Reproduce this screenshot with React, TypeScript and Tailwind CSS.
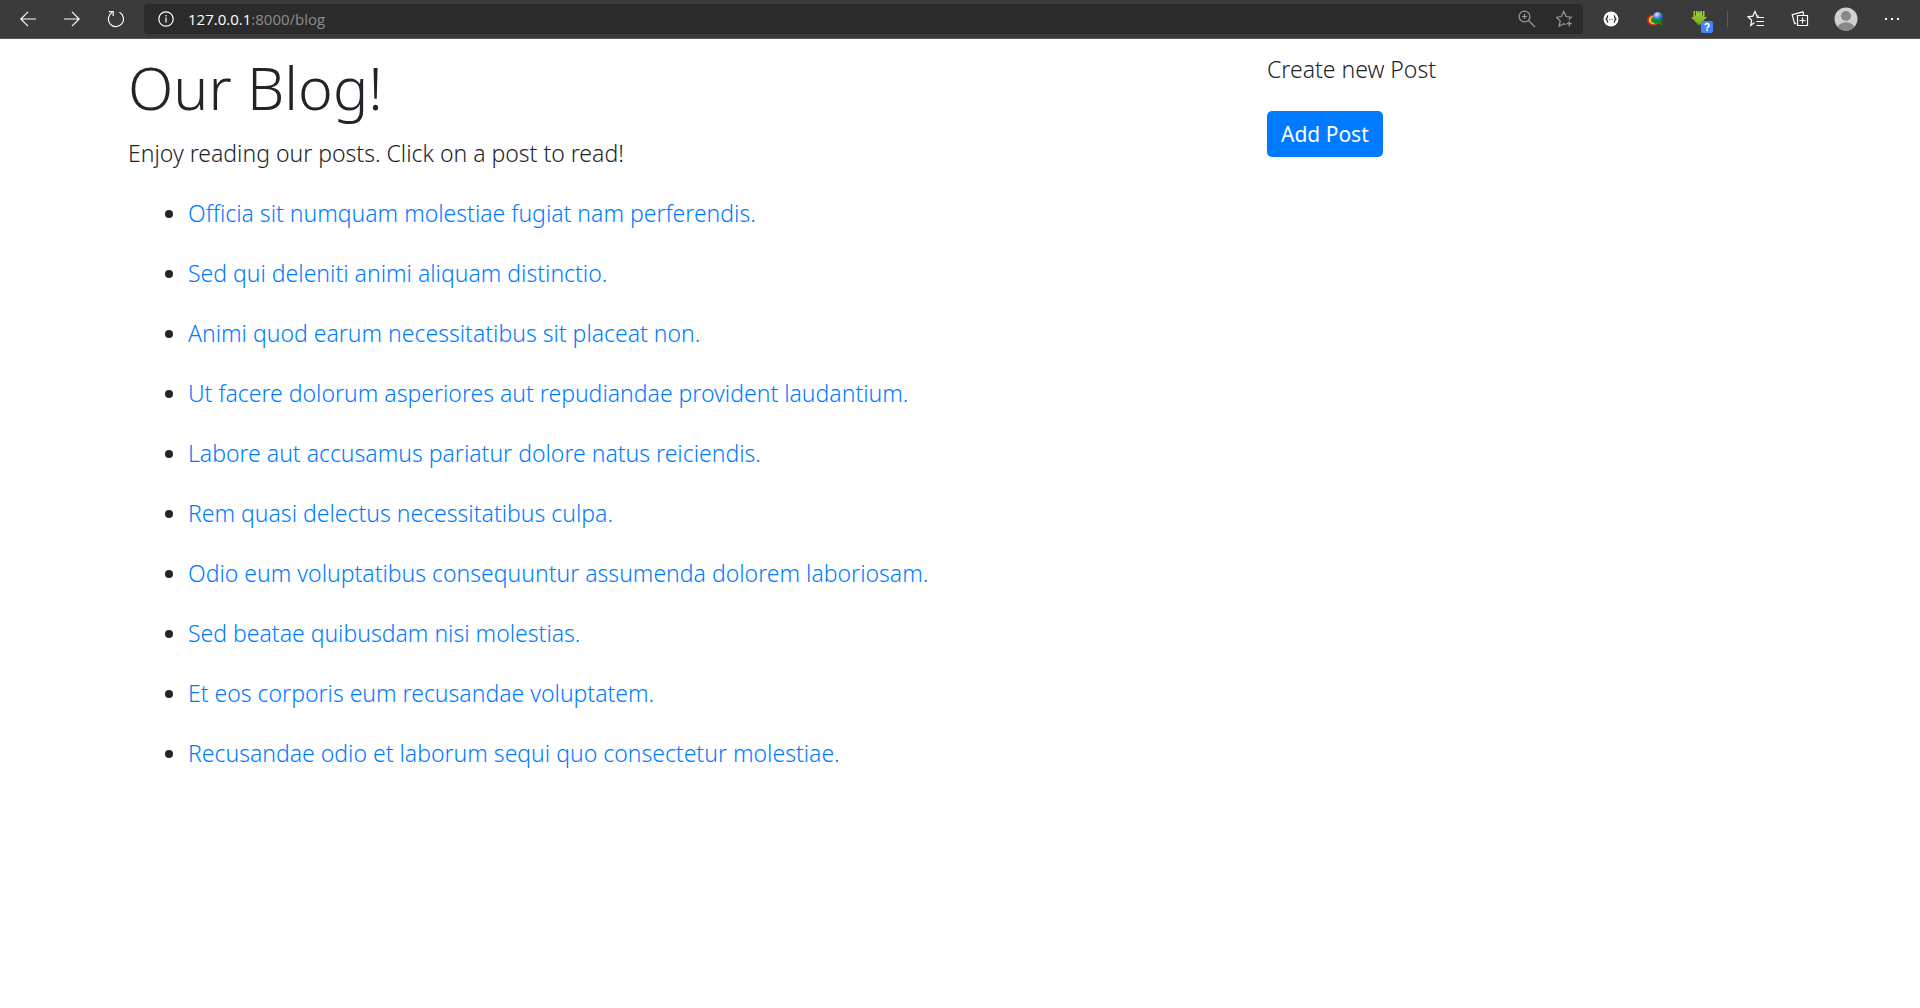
import type { ReactNode } from 'react';

const posts = [
  'Officia sit numquam molestiae fugiat nam perferendis.',
  'Sed qui deleniti animi aliquam distinctio.',
  'Animi quod earum necessitatibus sit placeat non.',
  'Ut facere dolorum asperiores aut repudiandae provident laudantium.',
  'Labore aut accusamus pariatur dolore natus reiciendis.',
  'Rem quasi delectus necessitatibus culpa.',
  'Odio eum voluptatibus consequuntur assumenda dolorem laboriosam.',
  'Sed beatae quibusdam nisi molestias.',
  'Et eos corporis eum recusandae voluptatem.',
  'Recusandae odio et laborum sequi quo consectetur molestiae.',
];

function ToolButton({ label, children }: { label: string; children: ReactNode }) {
  return (
    <button type="button" aria-label={label} className="flex h-[30px] w-11 items-center justify-center">
      {children}
    </button>
  );
}

const line = { fill: 'none', stroke: 'currentColor', strokeWidth: 1.2 } as const;

function BackIcon() {
  return (
    <svg width="16" height="16" viewBox="0 0 16 16" {...line}>
      <path d="M16 8H.8M8 .8.8 8 8 15.2" />
    </svg>
  );
}

function ForwardIcon() {
  return (
    <svg width="16" height="16" viewBox="0 0 16 16" {...line}>
      <path d="M0 8h15.200M8 .8 15.200 8 8 15.200" />
    </svg>
  );
}

function ReloadIcon() {
  return (
    <svg width="18" height="18" viewBox="0 0 18 18" {...line}>
      <path d="M12.500 2.300A7.600 7.600 0 1 1 5 2.500" />
      <path d="M1.800 1.700H6.200V6" />
    </svg>
  );
}

function InfoIcon() {
  return (
    <svg width="16" height="16" viewBox="0 0 16 16" {...line}>
      <circle cx="8" cy="8" r="7.200" />
      <path d="M8 6.500v5M8 4v1.400" />
    </svg>
  );
}

function ZoomIcon() {
  return (
    <svg width="18" height="18" viewBox="0 0 18 18" {...line}>
      <circle cx="6.500" cy="6.500" r="5.400" />
      <path d="M10.500 10.500 17 17M6.500 4v5M4 6.500h5" />
    </svg>
  );
}

function AddFavoriteIcon() {
  return (
    <svg width="18" height="18" viewBox="0 0 18 18" {...line}>
      <path d="M12.800 9.600 15.200 7.200l-5.100-.7L7.700 1.500 5.400 6.500.4 7.200l3.800 3.700-1 5.300 4.500-2.500 2 1.100" />
      <path d="M13.200 11v5.400M10.500 13.700h5.400" />
    </svg>
  );
}

function BracesIcon() {
  return (
    <svg width="16" height="16" viewBox="0 0 16 16" fill="none">
      <circle cx="8" cy="8" r="7.500" fill="#fff" />
      <path
        d="M5.200 4.700C3.900 4.700 4.600 7 3.200 8c1.400 1 .7 3.300 2 3.300M10.800 4.700c1.300 0 .6 2.300 2 3.300-1.400 1-.7 3.300-2 3.300"
        stroke="#222"
        strokeWidth="1.300"
      />
      <path d="M6 8.500h1M7.600 8.500h1M9.200 8.500h1" stroke="#777" />
    </svg>
  );
}

function DownloadManagerIcon() {
  return (
    <svg width="18" height="16" viewBox="0 0 18 16" fill="none">
      <defs>
        <radialGradient id="globe" cx=".4" cy=".25" r=".8">
          <stop offset="0" stopColor="#d5e9ff" />
          <stop offset=".5" stopColor="#3f7fdb" />
          <stop offset="1" stopColor="#153d8e" />
        </radialGradient>
      </defs>
      <ellipse cx="7.500" cy="9" rx="6.500" ry="5.500" fill="#d9291c" />
      <ellipse cx="8" cy="9" rx="5.200" ry="4.300" fill="#ffd21f" />
      <ellipse cx="8.500" cy="9" rx="3.900" ry="3.200" fill="#37a332" />
      <ellipse cx="9" cy="9" rx="2.500" ry="2" fill="#1f3f6e" />
      <circle cx="11.800" cy="6" r="5" fill="url(#globe)" />
      <path d="m6.500 8 10.500 1.600-2.300 1 2 2.400-2.600 1.400-1.800-2.700-3.300 1.500z" fill="#128a16" />
    </svg>
  );
}

function GreenArrowIcon() {
  return (
    <svg width="28" height="28" viewBox="0 0 28 28" fill="none" className="shrink-0">
      <defs>
        <linearGradient id="leaf" x1="0" y1="0" x2="0" y2="1">
          <stop offset="0" stopColor="#a3d43a" />
          <stop offset="1" stopColor="#6fa914" />
        </linearGradient>
      </defs>
      <path d="M8.500 6h11v6H22l-8 8.500L6 12h2.500z" fill="url(#leaf)" />
      <path d="M10.500 6v4.500M17.500 6v4.500M13 6v1.500M15 6v1.500" stroke="#3f5c14" />
      <rect x="16" y="16" width="12" height="12" rx="2" fill="#4285f4" />
      <path d="M20 20.300c.2-2.300 4-2.200 4 .1 0 1.500-1.900 1.400-1.900 3M22.100 24.500v1.500" stroke="#fff" strokeWidth="1.600" />
    </svg>
  );
}

function FavoritesIcon() {
  return (
    <svg width="18" height="18" viewBox="0 0 18 18" {...line}>
      <path d="M7.500 12.500 3.700 15.500l1-5.300L1 6.800l4.800-.6L8 1.500l2 4.700h2" />
      <path d="M9.500 7.500H17M9.500 11.500H17M9.500 15.500H17" />
    </svg>
  );
}

function CollectionsIcon() {
  return (
    <svg width="18" height="18" viewBox="0 0 18 18" {...line}>
      <path d="M5 13.300 3.600 13.600 1.200 4.600 12 1.800l.6 3" />
      <path d="M6.500 5.500h10v10h-10zM11.500 7.500v6M8.500 10.500h6" />
    </svg>
  );
}

function AvatarIcon() {
  return (
    <svg width="24" height="24" viewBox="0 0 24 24">
      <defs>
        <clipPath id="avatar">
          <circle cx="12" cy="12" r="11.500" />
        </clipPath>
      </defs>
      <g clipPath="url(#avatar)">
        <rect width="24" height="24" fill="#d2d0ce" />
        <circle cx="12" cy="9" r="5" fill="#8a8886" />
        <ellipse cx="12" cy="21" rx="8.500" ry="5.800" fill="#8a8886" />
      </g>
    </svg>
  );
}

function BrowserBar() {
  return (
    <header className="flex h-[39px] items-center border-b border-[#5a5858] bg-[#3b3b3b] px-1.5 text-white">
      <ToolButton label="Back"><BackIcon /></ToolButton>
      <ToolButton label="Forward"><ForwardIcon /></ToolButton>
      <ToolButton label="Reload"><ReloadIcon /></ToolButton>
      <div className="mx-1.5 flex h-[30px] flex-1 items-center rounded bg-[#2b2b2b] pr-[9px] pl-3.5">
        <InfoIcon />
        <a href="#" className='ml-3.5 flex-1 font-["Open_Sans",sans-serif] text-[15px] leading-5 font-normal text-[#8c8c8c]'>
          <span className="text-white">127.0.0.1</span>:8000/blog
        </a>
        <div className="flex gap-5 text-[#9a9a9a]">
          <button type="button" aria-label="Zoom"><ZoomIcon /></button>
          <button type="button" aria-label="Add to favorites"><AddFavoriteIcon /></button>
        </div>
      </div>
      <ToolButton label="JSON viewer"><BracesIcon /></ToolButton>
      <ToolButton label="Download manager"><DownloadManagerIcon /></ToolButton>
      <ToolButton label="Downloader"><GreenArrowIcon /></ToolButton>
      <div className="mx-1.5 h-4 w-px bg-[#5a5a5a]" />
      <ToolButton label="Favorites"><FavoritesIcon /></ToolButton>
      <ToolButton label="Collections"><CollectionsIcon /></ToolButton>
      <button type="button" aria-label="Profile" className="flex w-12 items-center justify-center">
        <AvatarIcon />
      </button>
      <ToolButton label="Settings and more">
        <svg width="16" height="4" viewBox="0 0 16 4" fill="currentColor">
          <path d="M1 1h2v2H1zM7 1h2v2H7zM13 1h2v2h-2z" />
        </svg>
      </ToolButton>
    </header>
  );
}

export default function App() {
  return (
    <div className='min-h-screen bg-white font-["Noto_Sans",sans-serif] font-light text-[#212529]'>
      <BrowserBar />
      <main className="mx-auto grid max-w-[1710px] grid-cols-3 pt-3 text-[23px] leading-9">
        <section className="col-span-2 px-[23px]">
          <h1 className="mb-3 text-[59px] leading-[72px]">Our Blog!</h1>
          <p className="mb-6">Enjoy reading our posts. Click on a post to read!</p>
          <ul className="list-disc space-y-6 pl-[60px]">
            {posts.map((post) => (
              <li key={post}>
                <a href="#" className="text-[#007bff]">{post}</a>
              </li>
            ))}
          </ul>
        </section>
        <aside className="px-[22px]">
          <p className="mb-6">Create new Post</p>
          <a href="#" className="block w-fit rounded-[5px] bg-[#007bff] px-3.5 py-[7px] text-[21px] leading-8 font-normal text-white">
            Add Post
          </a>
        </aside>
      </main>
    </div>
  );
}
